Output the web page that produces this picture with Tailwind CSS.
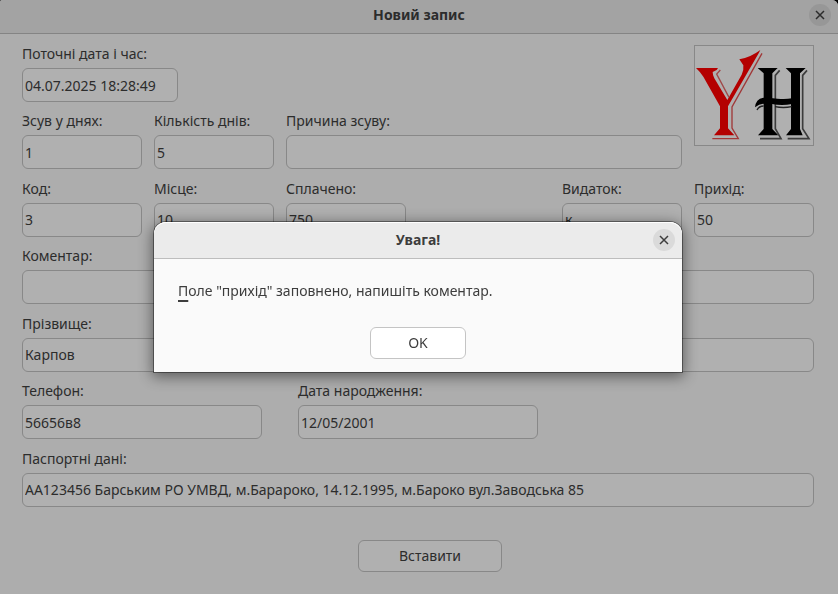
<!DOCTYPE html>
<html lang="uk">
<head>
<meta charset="utf-8">
<meta name="viewport" content="width=device-width, initial-scale=1">
<title>Новий запис</title>
<script src="https://cdn.jsdelivr.net/npm/@tailwindcss/browser@4"></script>
</head>
<body class="bg-black font-['Noto_Sans','Open_Sans',sans-serif] text-sm leading-5 text-[#2c2c2c]">
<div class="flex min-h-screen flex-col rounded-tl-[2px] rounded-tr-[6px] bg-[#adadad]">
  <header class="grid h-[34px] grid-cols-[1fr_auto_1fr] items-center rounded-tl-[2px] rounded-tr-[6px] border-b border-[#848484] bg-[#a3a3a3] px-[7px] pb-1">
    <h1 class="col-start-2 font-bold">Новий запис</h1>
    <button type="button" aria-label="Закрити вікно" class="flex size-[22px] items-center justify-center justify-self-end rounded-full bg-[#979797]">
      <svg class="size-4" viewBox="0 0 16 16" fill="none" stroke="#2c2c2c" stroke-width="1.5" aria-hidden="true"><path d="M4 4l8 8M12 4l-8 8"/></svg>
    </button>
  </header>

  <form class="flex flex-1 flex-col pt-[10px] pr-6 pb-[22px] pl-[22px]">
    <div class="grid flex-1 auto-rows-fr">
      <div class="row-span-2 flex gap-3">
        <div class="grid flex-1 auto-rows-fr">
          <div class="flex flex-col items-start gap-1">
            <label for="now">Поточні дата і час:</label>
            <input id="now" value="04.07.2025 18:28:49" class="h-[34px] w-[156px] rounded-md border border-[#888] bg-[#b0b0b0] px-0.5">
          </div>
          <div class="grid grid-cols-[10fr_10fr_33fr] gap-x-3">
            <div class="flex min-w-0 flex-col gap-1">
              <label for="shift">Зсув у днях:</label>
              <input id="shift" value="1" class="h-[34px] w-full rounded-md border border-[#888] bg-[#b0b0b0] px-0.5">
            </div>
            <div class="flex min-w-0 flex-col gap-1">
              <label for="days">Кількість днів:</label>
              <input id="days" value="5" class="h-[34px] w-full rounded-md border border-[#888] bg-[#b0b0b0] px-0.5">
            </div>
            <div class="flex min-w-0 flex-col gap-1">
              <label for="reason">Причина зсуву:</label>
              <input id="reason" value="" class="h-[34px] w-full rounded-md border border-[#888] bg-[#b0b0b0] px-0.5">
            </div>
          </div>
        </div>
        <div class="w-[120px] pt-px">
          <svg class="h-[101px] w-full" viewBox="30 135 360 303" role="img" aria-label="YH">
            <rect x="31.5" y="136.5" width="357" height="300" fill="#b0b0b0" stroke="#888" stroke-width="3"/>
            <path fill="#b40000" d="M36 204H102L98 210L86 216Q86 226 91 235L130 300L173 224Q180 210 178 196L166 178Q200 172 229 150L224 160L132 319V385L151 406H90L108 385V319L58 230Q50 217 36 204Z"/>
            <path fill="none" stroke="#a04848" stroke-width="4" d="M109 210L98 222L135 292"/>
            <path fill="none" stroke="#a03838" stroke-width="4" d="M234 160L144 321V384L163 416H85"/>
            <path fill="#000" d="M221 204H281L265 220V387L283 406H222L239 387V220Z"/>
            <path fill="none" stroke="#3c3c3c" stroke-width="5" d="M287 211L274 226V386L291 416H228"/>
            <path fill="#000" d="M305 204H365L348 220V387L356 406H306L321 387V220Z"/>
            <path fill="none" stroke="#3c3c3c" stroke-width="5" d="M369 211L356 226V386L375 416H311"/>
            <path fill="#000" d="M213 322Q215 297 238 293Q262 293 280 296Q305 298 324 295V312Q294 318 264 312Q232 306 213 322Z"/>
            <path fill="none" stroke="#222" stroke-width="4" d="M219 330Q225 318 239 318M273 320Q298 325 323 320"/>
          </svg>
        </div>
      </div>

      <div class="grid grid-cols-[10fr_10fr_10fr_11fr_10fr_10fr] gap-x-3">
        <div class="flex min-w-0 flex-col gap-1">
          <label for="code">Код:</label>
          <input id="code" value="3" class="h-[34px] w-full rounded-md border border-[#888] bg-[#b0b0b0] px-0.5">
        </div>
        <div class="flex min-w-0 flex-col gap-1">
          <label for="place">Місце:</label>
          <input id="place" value="10" class="h-[34px] w-full rounded-md border border-[#888] bg-[#b0b0b0] px-0.5">
        </div>
        <div class="flex min-w-0 flex-col gap-1">
          <label for="paid">Сплачено:</label>
          <input id="paid" value="750" class="h-[34px] w-full rounded-md border border-[#888] bg-[#b0b0b0] px-0.5">
        </div>
        <div class="col-start-5 flex min-w-0 flex-col gap-1">
          <label for="expense">Видаток:</label>
          <input id="expense" value="к" class="h-[34px] w-full rounded-md border border-[#888] bg-[#b0b0b0] px-0.5">
        </div>
        <div class="flex min-w-0 flex-col gap-1">
          <label for="income">Прихід:</label>
          <input id="income" value="50" class="h-[34px] w-full rounded-md border border-[#888] bg-[#b0b0b0] px-0.5">
        </div>
      </div>

      <div class="flex flex-col gap-1">
        <label for="comment">Коментар:</label>
        <input id="comment" value="" class="h-[34px] w-full rounded-md border border-[#888] bg-[#b0b0b0] px-0.5">
      </div>

      <div class="flex flex-col gap-1">
        <label for="surname">Прізвище:</label>
        <input id="surname" value="Карпов" class="h-[34px] w-full rounded-md border border-[#888] bg-[#b0b0b0] px-0.5">
      </div>

      <div class="grid grid-cols-[20fr_1fr_20fr_22fr] gap-x-3">
        <div class="flex min-w-0 flex-col gap-1">
          <label for="phone">Телефон:</label>
          <input id="phone" value="56656в8" class="h-[34px] w-full rounded-md border border-[#888] bg-[#b0b0b0] px-0.5">
        </div>
        <div class="col-start-3 flex min-w-0 flex-col gap-1">
          <label for="birth">Дата народження:</label>
          <input id="birth" value="12/05/2001" class="h-[34px] w-full rounded-md border border-[#888] bg-[#b0b0b0] px-0.5">
        </div>
      </div>

      <div class="flex flex-col gap-1">
        <label for="passport">Паспортні дані:</label>
        <input id="passport" value="АА123456 Барським РО УМВД, м.Барароко, 14.12.1995, м.Бароко вул.Заводська 85" class="h-[34px] w-full rounded-md border border-[#888] bg-[#b0b0b0] px-0.5">
      </div>
    </div>

    <div class="mt-6 grid grid-cols-[28fr_12fr_26fr]">
      <button type="submit" class="col-start-2 h-8 rounded-md border border-[#888] bg-[#b0b0b0]">Вставити</button>
    </div>
  </form>
</div>

<div class="fixed inset-0 flex items-center justify-center pr-0.5">
  <section role="dialog" aria-modal="true" aria-labelledby="alert-title" aria-describedby="alert-text" class="w-full max-w-[528px] rounded-t-xl bg-[#fafafa] text-[#3d3d3d] shadow-[0_0_0_1px_rgba(0,0,0,0.4),0_3px_14px_2px_rgba(0,0,0,0.45)]">
    <header class="grid h-[37px] grid-cols-[1fr_auto_1fr] items-center rounded-t-xl border-b border-[#bdbdbd] bg-[#ebebeb] px-[7px] shadow-[inset_0_1px_#fff]">
      <h2 id="alert-title" class="col-start-2 font-bold">Увага!</h2>
      <button type="button" aria-label="Закрити" class="flex size-[22px] items-center justify-center justify-self-end rounded-full bg-[#dadada]">
        <svg class="size-4" viewBox="0 0 16 16" fill="none" stroke="#3d3d3d" stroke-width="1.5" aria-hidden="true"><path d="M4 4l8 8M12 4l-8 8"/></svg>
      </button>
    </header>
    <div class="flex flex-col gap-[26px] px-6 pt-[22px] pb-[13px]">
      <p id="alert-text"><span class="underline decoration-2 underline-offset-4">П</span>оле "прихід" заповнено, напишіть коментар.</p>
      <button type="button" class="h-8 w-24 self-center rounded-md border border-[#c4c4c4] bg-white">OK</button>
    </div>
  </section>
</div>
</body>
</html>
